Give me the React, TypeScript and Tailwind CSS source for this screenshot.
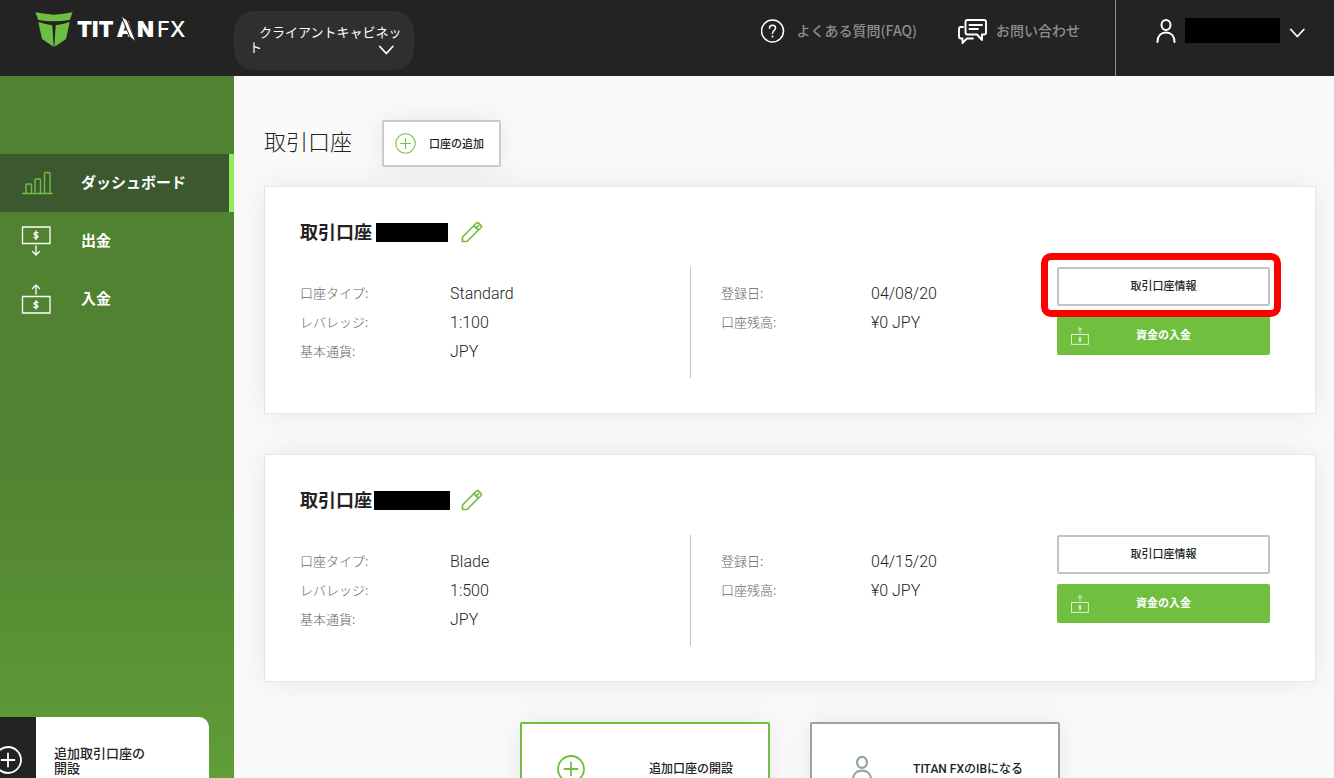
import type { ReactNode } from "react";

type IconProps = { className?: string };

const stroke = {
  fill: "none",
  stroke: "currentColor",
  strokeLinecap: "round",
  strokeLinejoin: "round",
} as const;

function ShieldMark() {
  return (
    <svg viewBox="0 0 112 105" className="h-[35px] w-[38px] fill-[#6fbe44]" aria-hidden="true">
      <path d="M0 1 Q28 7 56 8 Q84 7 112 1 L103 24 Q80 28 56 28 Q32 28 9 24 Z" />
      <path d="M9 30 Q30 37 51 40 L55 104 L50 101 L20 81 Z" />
      <path d="M103 30 Q82 37 61 40 L57 104 L62 101 L92 81 Z" />
    </svg>
  );
}

function ChevronDown({ className }: IconProps) {
  return (
    <svg viewBox="0 0 16 10" className={className} {...stroke} strokeWidth={1.8} aria-hidden="true">
      <path d="M1.800 1.500 8.300 8.500l6.500-7" />
    </svg>
  );
}

function HelpIcon() {
  return (
    <svg viewBox="0 0 24 24" className="size-6 text-white" {...stroke} strokeWidth={1.5} aria-hidden="true">
      <circle cx="11.500" cy="12" r="11" />
      <path d="M8.500 9.200C8.500 7.300 9.800 6.300 11.500 6.300s3 1.100 3 2.800c0 2.400-3 2.500-3 5.300" />
      <path d="M11.500 17.300v.4" strokeWidth={1.8} />
    </svg>
  );
}

function ChatIcon() {
  return (
    <svg viewBox="0 0 30 26" className="h-[26px] w-[30px] text-white" {...stroke} strokeWidth={1.9} aria-hidden="true">
      <path d="M10.500 2h16.500a2 2 0 0 1 2 2v10.500a2 2 0 0 1-2 2H25V22l-5-5.500h-9.500a2 2 0 0 1-2-2V4a2 2 0 0 1 2-2Z" />
      <path d="M12.500 7h12.500M12.500 11h8.500" />
      <path d="M6 9H4a2 2 0 0 0-2 2v7.500a2 2 0 0 0 2 2h1.500V25l4.500-4.500h6" />
    </svg>
  );
}

function PersonIcon({ className }: IconProps) {
  return (
    <svg viewBox="0 0 20 24" className={className} {...stroke} strokeWidth={2} aria-hidden="true">
      <ellipse cx="10" cy="6" rx="4.500" ry="5" />
      <path d="M1.500 23c0-6 3.500-9.500 8.500-9.500s8.500 3.500 8.500 9.500" />
    </svg>
  );
}

function PlusCircle({ className, width }: { className: string; width: number }) {
  return (
    <svg viewBox="0 0 28 28" className={className} {...stroke} strokeWidth={width} aria-hidden="true">
      <circle cx="14" cy="14" r="13" />
      <path d="M14 7.500v13M7.500 14h13" />
    </svg>
  );
}

function ChartIcon() {
  return (
    <svg viewBox="0 0 32 24" className="h-6 w-8 text-[#6fbe44]" {...stroke} strokeWidth={1.4} aria-hidden="true">
      <path d="M1.500 22.500h30" />
      <path d="M5 22V14a1 1 0 0 1 1-1h3.500a1 1 0 0 1 1 1v8M14 22V9a1 1 0 0 1 1-1h3.500a1 1 0 0 1 1 1v13M23.500 22V2.500a1 1 0 0 1 1-1h3.500a1 1 0 0 1 1 1V22" />
    </svg>
  );
}

function Dollar({ y }: { y: number }) {
  return (
    <g transform={`translate(15 ${y})`}>
      <path d="M2-2.200C1.500-3-2-3.200-2-1.300c0 1.600 4 1 4 2.700 0 1.900-3.600 1.700-4.100.7M0-4.200v8.400" />
    </g>
  );
}

function WithdrawIcon() {
  return (
    <svg viewBox="0 0 30 30" className="size-[30px] text-white" {...stroke} strokeWidth={1.3} aria-hidden="true">
      <path strokeLinejoin="miter" d="M1.500 1h27.500v16.500H1.500Z" />
      <Dollar y={9.2} />
      <path d="M15 20v8.500M11.500 25.500 15 29l3.500-3.500" />
    </svg>
  );
}

function DepositIcon({ className }: IconProps) {
  return (
    <svg viewBox="0 0 30 30" className={className} {...stroke} strokeWidth={1.3} aria-hidden="true">
      <path strokeLinejoin="miter" d="M1.500 12.500h27.500V29H1.500Z" />
      <Dollar y={20.8} />
      <path d="M15 10V1.500M11.500 4.500 15 1l3.500 3.500" />
    </svg>
  );
}

function PencilIcon() {
  return (
    <svg viewBox="0 0 22 22" className="size-[22px] text-[#6fbe44]" {...stroke} strokeWidth={1.7} aria-hidden="true">
      <path d="M1.500 20.500v-4.500L15.500 2a1.500 1.500 0 0 1 2 0L20 4.500a1.500 1.500 0 0 1 0 2L6 20.500H1.500Z" />
      <path d="M12.800 4.700l4.500 4.500M15.200 7l2.300-2.300" />
    </svg>
  );
}

function Header() {
  return (
    <header className="flex h-[76px] shrink-0 bg-[#232323] text-white">
      <a href="#" aria-label="TITANFX" className="flex w-[234px] shrink-0 items-start gap-1 pt-3 pl-[35px]">
        <ShieldMark />
        <span className="relative flex gap-[3px] pt-[5px] font-[Inter,sans-serif] text-[22px] leading-6 font-black">
          <span>TIT</span>
          <span>A</span>
          <span>N</span>
          <span className="font-medium">FX</span>
          <svg viewBox="0 0 16 26" className="absolute top-1 left-[44px] h-[26px] w-4 fill-white stroke-[#232323]" aria-hidden="true">
            <path d="M0 0 6 4 15 26 9 21Z" />
          </svg>
        </span>
      </a>
      <button
        type="button"
        className="relative mt-[11px] h-[59px] w-[180px] rounded-[20px] bg-[#2f2f2f] pr-3 pb-1 pl-[15px] text-left indent-[10px] text-[13px] leading-[15px]"
      >
        クライアントキャビネット
        <ChevronDown className="absolute right-5 bottom-[15px] h-[10px] w-4" />
      </button>
      <nav className="ml-auto flex h-[61px] items-center gap-10 pr-[35px] text-sm font-medium text-[#8d8d8d]">
        <a href="#" className="flex items-center gap-3">
          <HelpIcon />
          <span className="pb-0.5">よくある質問(FAQ)</span>
        </a>
        <a href="#" className="flex items-center gap-[9px]">
          <ChatIcon />
          <span className="pb-0.5">お問い合わせ</span>
        </a>
      </nav>
      <div className="w-[219px] border-l border-[#8d8d8d]">
        <button type="button" aria-label="アカウント" className="flex h-[61px] items-center gap-[9px] pl-10">
          <PersonIcon className="h-6 w-5" />
          <span className="h-[25px] w-[95px] bg-black" />
          <ChevronDown className="mt-1 h-[10px] w-4" />
        </button>
      </div>
    </header>
  );
}

function NavItem({ icon, label, active }: { icon: ReactNode; label: string; active?: boolean }) {
  return (
    <a
      href="#"
      aria-current={active ? "page" : undefined}
      className={`flex h-[58px] items-center border-r-[5px] pl-[21px] text-[15px] font-bold text-white ${
        active ? "border-[#90ee5c] bg-[#3c582f]" : "border-transparent"
      }`}
    >
      <span className="w-[60px]">{icon}</span>
      <span className="pb-0.5">{label}</span>
    </a>
  );
}

function Sidebar() {
  return (
    <aside className="flex w-[234px] shrink-0 flex-col bg-linear-to-b from-[#518231] from-55% to-[#5f9e38] pt-[78px]">
      <nav>
        <NavItem icon={<ChartIcon />} label="ダッシュボード" active />
        <NavItem icon={<WithdrawIcon />} label="出金" />
        <NavItem icon={<DepositIcon className="size-[30px] text-white" />} label="入金" />
      </nav>
      <a href="#" className="mt-auto -mb-6 flex h-[85px] w-[209px] overflow-hidden rounded-r-[10px] bg-white">
        <span className="flex w-9 shrink-0 items-center bg-[#232323] text-white">
          <PlusCircle className="-ml-[6px] size-7" width={1.8} />
        </span>
        <span className="w-[120px] self-center pl-[18px] text-[13px] leading-[15px] font-medium">追加取引口座の開設</span>
      </a>
    </aside>
  );
}

type Account = {
  type: string;
  leverage: string;
  currency: string;
  registered: string;
  balance: string;
  mask: string;
  highlighted?: boolean;
};

const accounts: Account[] = [
  {
    type: "Standard",
    leverage: "1:100",
    currency: "JPY",
    registered: "04/08/20",
    balance: "¥0 JPY",
    mask: "ml-1 mr-[13px] w-[72px]",
    highlighted: true,
  },
  {
    type: "Blade",
    leverage: "1:500",
    currency: "JPY",
    registered: "04/15/20",
    balance: "¥0 JPY",
    mask: "ml-[2px] mr-[11px] w-[76px]",
  },
];

function Details({ rows, className }: { rows: [string, string][]; className: string }) {
  return (
    <dl className={`pt-3 ${className}`}>
      {rows.map(([label, value]) => (
        <div key={label} className="flex h-[29px]">
          <dt className="w-[150px] text-[13px] leading-[27px] font-light text-[#666]">{label}</dt>
          <dd className="font-[Roboto,'Noto_Sans_CJK_JP',sans-serif] text-base leading-[29px] font-light">{value}</dd>
        </div>
      ))}
    </dl>
  );
}

function AccountCard({ account }: { account: Account }) {
  return (
    <section className="h-[228px] border border-[#e6e6e6] bg-white pt-[31px] pr-[45px] pl-[35px] shadow-[0_0_30px_rgba(0,0,0,0.08)]">
      <h2 className="flex h-7 items-center text-lg font-bold">
        <span className="pb-0.5">取引口座</span>
        <span className={`h-[19px] bg-black ${account.mask}`} />
        <button type="button" aria-label="編集">
          <PencilIcon />
        </button>
      </h2>
      <div className="mt-[21px] grid grid-cols-[minmax(0,1fr)_366px_213px]">
        <Details
          className="h-[111px] border-r border-[#c4c4c4]"
          rows={[
            ["口座タイプ:", account.type],
            ["レバレッジ:", account.leverage],
            ["基本通貨:", account.currency],
          ]}
        />
        <Details
          className="pl-[30px]"
          rows={[
            ["登録日:", account.registered],
            ["口座残高:", account.balance],
          ]}
        />
        <div className="relative flex flex-col gap-[10px] text-[11px]">
          <button type="button" className="h-[39px] rounded-[2px] border-2 border-[#c4c4c4] pb-0.5 font-medium">
            取引口座情報
          </button>
          <button
            type="button"
            className="grid h-[39px] grid-cols-[1fr_auto_1fr] items-center rounded-[2px] bg-[#70bf3f] font-bold text-white"
          >
            <DepositIcon className="ml-[14px] size-[18px]" />
            <span className="pb-0.5">資金の入金</span>
          </button>
          {account.highlighted && (
            <div className="pointer-events-none absolute -top-[14px] -right-[11px] -left-4 h-16 rounded-[10px] border-[7px] border-[#fe0000]" />
          )}
        </div>
      </div>
    </section>
  );
}

function ActionCard({ icon, label, className }: { icon: ReactNode; label: string; className: string }) {
  return (
    <a
      href="#"
      className={`flex h-[94px] w-[250px] items-center justify-between rounded-[2px] border-2 bg-white px-[35px] font-[Roboto,'Noto_Sans_CJK_JP',sans-serif] text-xs font-medium shadow-[0_0_30px_rgba(0,0,0,0.08)] ${className}`}
    >
      {icon}
      {label}
    </a>
  );
}

export default function App() {
  return (
    <div className="flex h-screen flex-col overflow-hidden bg-[#fafafa] font-['Noto_Sans_CJK_JP',sans-serif] text-[#222]">
      <Header />
      <div className="flex min-h-0 flex-1">
        <Sidebar />
        <main className="min-w-0 flex-1 overflow-hidden pt-11 pr-[18px] pl-[30px]">
          <div className="mb-[19px] flex items-start gap-[30px]">
            <h1 className="text-[22px] leading-10 font-light">取引口座</h1>
            <button
              type="button"
              className="flex h-[47px] items-center gap-[13px] rounded-[2px] border-2 border-[#ccc] bg-white pr-[15px] pl-[11px] text-[11px] font-medium shadow-[0_0_30px_rgba(0,0,0,0.08)]"
            >
              <PlusCircle className="size-[21px] text-[#6fbe44]" width={1.4} />
              口座の追加
            </button>
          </div>
          <div className="flex flex-col gap-10">
            {accounts.map((account) => (
              <AccountCard key={account.type} account={account} />
            ))}
            <div className="flex justify-center gap-10">
              <ActionCard
                className="border-[#70bf3f]"
                icon={<PlusCircle className="size-7 text-[#70bf3f]" width={1.8} />}
                label="追加口座の開設"
              />
              <ActionCard
                className="border-[#93a5a5]"
                icon={<PersonIcon className="mx-1 h-7 w-[22px] text-[#93a5a5]" />}
                label="TITAN FXのIBになる"
              />
            </div>
          </div>
        </main>
      </div>
    </div>
  );
}
